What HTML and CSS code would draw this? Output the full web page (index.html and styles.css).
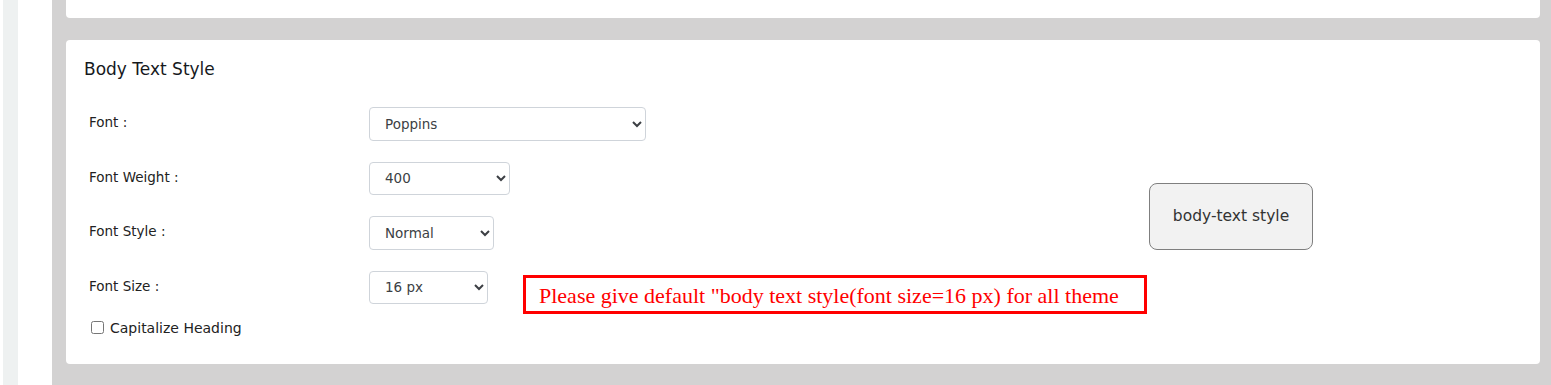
FILE: index.html
```html
<!DOCTYPE html>
<html>
<head>
  <meta charset="UTF-8" />
  <title>Body Text Style</title>
  <meta name="viewport" content="width=device-width, initial-scale=1" />
  <link rel="stylesheet" href="styles.css">
</head>
<body>
  <div class="side">
    <div class="side-rail"></div>
  </div>
  <div class="main">
    <div class="card card-top"></div>

    <div class="card">
      <h2>Body Text Style</h2>
      <div class="card-body">
        <div class="form">
          <div class="row">
            <label for="font">Font :</label>
            <select id="font" class="sel-font">
              <option>Poppins</option>
            </select>
          </div>
          <div class="row">
            <label for="weight">Font Weight :</label>
            <select id="weight" class="sel-weight">
              <option>400</option>
            </select>
          </div>
          <div class="row">
            <label for="style">Font Style :</label>
            <select id="style" class="sel-style">
              <option>Normal</option>
            </select>
          </div>
          <div class="row row-last">
            <label for="size">Font Size :</label>
            <select id="size" class="sel-size">
              <option>16 px</option>
            </select>
            <div class="note">Please give default "body text style(font size=16 px) for all theme</div>
          </div>
          <div class="check">
            <input type="checkbox" id="cap">
            <label for="cap">Capitalize Heading</label>
          </div>
        </div>
        <div class="preview">
          <button class="preview-btn">body-text style</button>
        </div>
      </div>
    </div>
  </div>
</body>
</html>
```

FILE: styles.css
```css
body {
  margin: 0;
  font-family: "DejaVu Sans", "Open Sans", Arial, sans-serif;
  color: #212529;
  background-color: #d3d2d2;
  display: flex;
  height: 385px;
  overflow: hidden;
}
.side {
  display: flex;
  width: 52px;
  background: #fff;
  flex-shrink: 0;
}
.side-rail {
  width: 15px;
  margin-left: 3px;
  background: #eef1f1;
}
.main {
  flex: 1;
  padding: 0 11px 0 14px;
}
.card {
  background: #fff;
  border-radius: 4px;
  padding: 19px 18px 0 18px;
  height: 324px;
  box-sizing: border-box;
}
.card-top {
  height: 18px;
  margin-bottom: 22px;
  padding: 0;
  border-radius: 0 0 4px 4px;
}
h2 {
  font-size: 17px;
  font-weight: 500;
  margin: 0 0 28px 0;
  color: #16191d;
}
.card-body {
  display: flex;
}
.form {
  width: 1065px;
  box-sizing: border-box;
  padding-left: 5px;
}
.row {
  display: flex;
  align-items: flex-start;
  height: 34px;
  margin-bottom: 20.5px;
}
.row-last {
  margin-bottom: 0;
}
.row label {
  width: 280px;
  flex-shrink: 0;
  font-size: 13.5px;
  line-height: 30px;
  color: #222;
}
select {
  flex-shrink: 0;
  height: 34px;
  border: 1px solid #cfd4da;
  border-radius: 4px;
  background: #fff;
  font-family: inherit;
  font-size: 13.5px;
  color: #3c3f44;
  padding: 0 8px 0 11px;
}
.sel-font { width: 277px; }
.sel-weight { width: 141px; height: 33px; }
.sel-style { width: 125px; }
.sel-size { width: 119px; height: 33px; }
.note {
  flex-shrink: 0;
  margin: 4px 0 0 35px;
  border: 3px solid #ff0000;
  width: 605px;
  height: 33px;
  padding-left: 13px;
  font-family: "Liberation Serif", "Times New Roman", serif;
  font-size: 22px;
  line-height: 35px;
  color: #ff0000;
  white-space: nowrap;
  overflow: hidden;
}
.check {
  display: flex;
  align-items: center;
  margin-top: 15px;
  padding-left: 1px;
}
.check input {
  margin: 0 6px 0 1px;
  width: 13px;
  height: 13px;
}
.check label {
  font-size: 14px;
  color: #222;
}
.preview {
  display: flex;
  align-items: center;
  padding-bottom: 10px;
}
.preview-btn {
  width: 164px;
  height: 67px;
  background: #f2f2f2;
  border: 1px solid #7f7f7f;
  border-radius: 8px;
  font-family: inherit;
  font-size: 15.5px;
  color: #333;
  cursor: pointer;
}
```
